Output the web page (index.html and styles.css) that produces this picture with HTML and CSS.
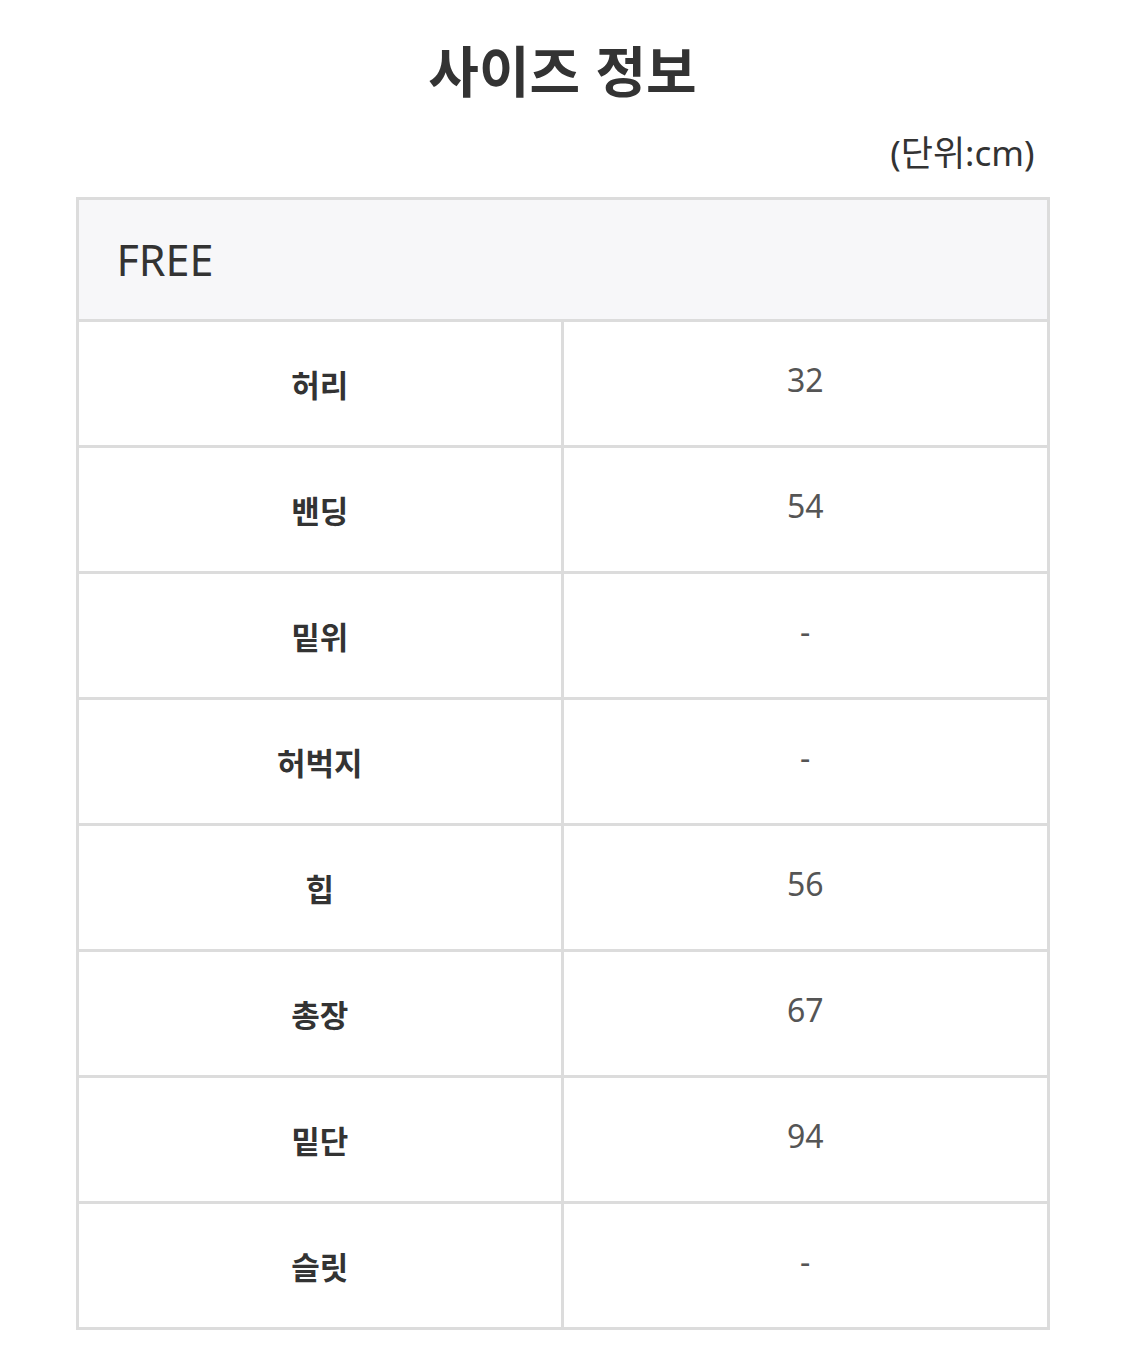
FILE: index.html
```html
<!DOCTYPE html>
<html lang="ko">
<head>
<meta charset="utf-8">
<title>사이즈 정보</title>
<link rel="stylesheet" href="styles.css">
</head>
<body>
<div class="page">
  <h1 class="title">사이즈 정보</h1>
  <div class="unit">(단위:cm)</div>
  <table class="size-table">
    <thead>
      <tr><th colspan="2" class="size-head">FREE</th></tr>
    </thead>
    <tbody>
      <tr><td class="label">허리</td><td class="value">32</td></tr>
      <tr><td class="label">밴딩</td><td class="value">54</td></tr>
      <tr><td class="label">밑위</td><td class="value">-</td></tr>
      <tr><td class="label">허벅지</td><td class="value">-</td></tr>
      <tr><td class="label">힙</td><td class="value">56</td></tr>
      <tr><td class="label">총장</td><td class="value">67</td></tr>
      <tr><td class="label">밑단</td><td class="value">94</td></tr>
      <tr><td class="label">슬릿</td><td class="value">-</td></tr>
    </tbody>
  </table>
</div>
</body>
</html>
```
FILE: styles.css
```css
html, body {
  margin: 0;
  padding: 0;
  background: #fff;
}
body {
  font-family: "Noto Sans", "Noto Sans CJK KR", sans-serif;
  color: #333;
}
.page {
  width: 974px;
  margin: 0 auto;
  padding-top: 28px;
}
.title {
  margin: 0;
  text-align: center;
  font-family: "Noto Sans CJK KR", sans-serif;
  font-weight: 700;
  font-size: 55px;
  line-height: 80px;
  color: #333;
}
.unit {
  text-align: right;
  font-family: "Noto Sans", "Noto Sans CJK KR", sans-serif;
  font-size: 35px;
  line-height: 60px;
  padding-right: 15px;
  color: #333;
  margin-top: 15px;
  margin-bottom: 14px;
}
.size-table {
  width: 974px;
  border-collapse: collapse;
  table-layout: fixed;
}
.size-table th,
.size-table td {
  border: 3px solid #dcdcdc;
  padding: 0;
}
.size-head {
  height: 119px;
  background: #f7f7f9;
  text-align: left;
  padding-left: 38px !important;
  font-family: "Noto Sans", sans-serif;
  font-weight: 400;
  font-size: 43px;
  color: #333;
}
.size-table td {
  height: 123px;
  text-align: center;
  vertical-align: middle;
}
.label {
  font-family: "Noto Sans CJK KR", sans-serif;
  font-weight: 700;
  font-size: 31px;
  color: #333;
}
.size-table td.value {
  font-family: "Noto Sans", sans-serif;
  font-size: 32px;
  color: #555;
  height: 115px;
  padding-bottom: 8px;
}
```
